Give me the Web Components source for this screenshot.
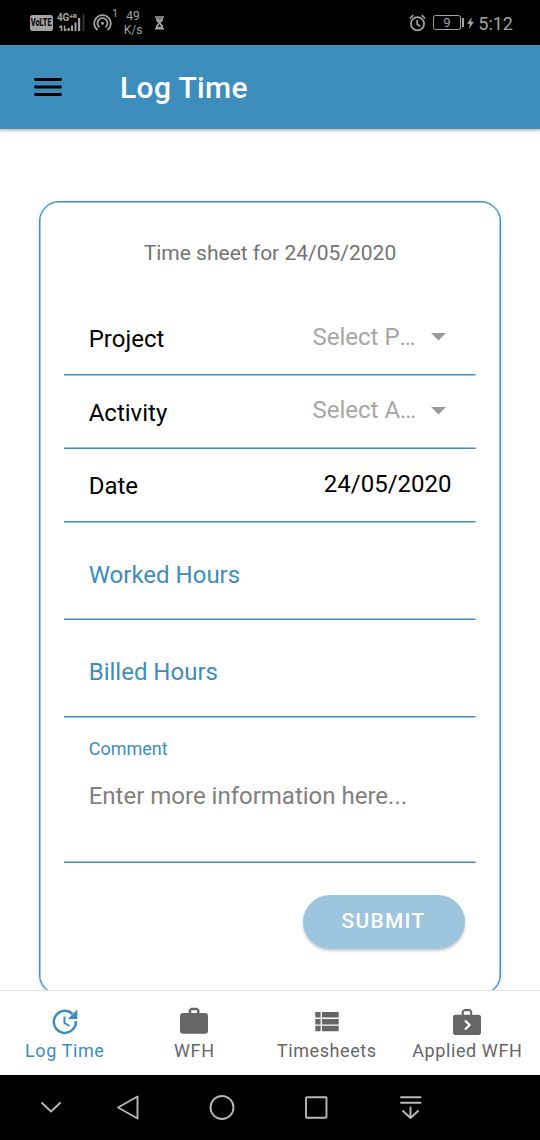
<!DOCTYPE html>
<html lang="en">
<head>
<meta charset="utf-8">
<title>Log Time</title>
<style>
html,body{margin:0;height:100%;background:#fff;overflow:hidden}
body{font-family:Roboto,"Liberation Sans",sans-serif;--brand:#3d8dbd;--soft:#9ac4de;
--upper:linear-gradient(var(--brand) 50%,var(--soft) 50%) bottom/100% 2px no-repeat;
--lower:linear-gradient(var(--soft) 50%,var(--brand) 50%) bottom/100% 2px no-repeat}
</style>
</head>
<body>
<log-app></log-app>
<script>
const define = (name, html) => customElements.define(name, class extends HTMLElement {
  constructor() {
    super();
    const t = document.createElement('template');
    t.innerHTML = html;
    this.attachShadow({mode: 'open'}).append(t.content.cloneNode(true));
  }
});

define('status-bar', `
<style>
:host{display:flex;height:45px;background:#000;color:#a3a3a3;box-sizing:border-box;padding:0 27px 0 30px;align-items:flex-start}
svg{display:block;flex:none}
.volte{box-sizing:border-box;width:23px;height:16px;margin-top:15px;border-radius:2.5px;background:#a3a3a3;color:#111;font:900 10px/16px Roboto;display:flex;justify-content:center}
.volte span{transform:scaleX(.74)}
.net{width:30px;margin:12px 0 0 4px;font:700 10px/11px Roboto;letter-spacing:-.3px;position:relative;white-space:nowrap}
.net svg{position:absolute;left:0;top:0}
.hot{margin:14px 0 0 6px}
.one{font-size:11px;line-height:12px;margin:8px 0 0 0;width:6px}
.rate{width:20px;margin:9px 0 0 5px;font-size:12px;line-height:14px;text-align:center;white-space:nowrap}
.glass{margin:16px 0 0 10.5px}
.sp{flex:1}
.alarm{margin:14px 7px 0 0}
.bat{box-sizing:border-box;width:28px;height:15px;border:1px solid #a3a3a3;border-radius:2.5px;margin-top:15px;font-size:13px;line-height:14px;text-align:center}
.nub{width:2px;height:9px;background:#a3a3a3;margin:18px 0 0 1px}
.bolt{margin:17px 0 0 3px}
.time{font-size:18px;line-height:22px;margin:13px 0 0 4.5px}
</style>
<div class="volte"><span>VoLTE</span></div>
<div class="net">4G⁺ᴿ<svg width="30" height="20" viewBox="0 0 30 20"><path d="M4.500 14v5M2.500 15.500l2-2M7.500 13.500v5M9.500 17l-2 2" stroke="#a3a3a3" stroke-width="1.500" fill="none"/><path d="M10.500 16h2.200v3h-2.200zM14 13.500h2v5.500h-2zM17.500 10.500h2v8.500h-2zM21 6h2.200v13h-2.200z" fill="#a3a3a3"/><path d="M25.500 2v17h2v-17z" fill="#333"/></svg></div>
<svg class="hot" width="19" height="18" viewBox="0 0 19 18" fill="none" stroke="#a3a3a3" stroke-width="1.800"><path d="M4.500 16A8.300 8.300 0 1 1 14.500 16M6.500 13.200A5 5 0 1 1 12.500 13.200"/><circle cx="9.500" cy="9.300" r="1.500" fill="#a3a3a3" stroke="none"/></svg>
<div class="one">1</div>
<div class="rate">49<br>K/s</div>
<svg class="glass" width="11" height="14" viewBox="0 0 11 14"><path d="M1 1h9M1 12.800h9" stroke="#a3a3a3" stroke-width="1.500"/><path d="M2 2h7v2.500L6.500 7 9 9.500V12H2V9.500L4.500 7 2 4.500z" fill="#a3a3a3"/><path d="M3.500 3h4M5.500 8.500l-1.500 2h3z" stroke="#222" stroke-width=".7"/></svg>
<div class="sp"></div>
<svg class="alarm" width="17" height="18" viewBox="0 0 17 18" fill="none" stroke="#a3a3a3" stroke-width="1.700"><circle cx="8.500" cy="9.800" r="6.600"/><path d="M8.200 6v4.200l3 2.200M.8 4.500 4.300 1.200M16.200 4.500l-3.500-3.300"/></svg>
<div class="bat">9</div><div class="nub"></div>
<svg class="bolt" width="7" height="12" viewBox="0 0 7 12"><path d="M5 0 0 6.800h2.800L1.800 12 7 4.800H4z" fill="#a3a3a3"/></svg>
<div class="time">5:12</div>
`);

define('app-header', `
<style>
:host{display:flex;box-sizing:border-box;height:84px;background:var(--brand);padding-left:34px;align-items:center;position:relative;z-index:1;box-shadow:0 2px 1px rgba(0,0,0,.13),0 3px 3px rgba(0,0,0,.07)}
h1{margin:1px 0 0 58px;font-weight:500;font-size:30px;line-height:36px;color:#fff;letter-spacing:.35px}
</style>
<svg width="28" height="20" viewBox="0 0 28 20"><path d="M1.500 2.500h25M1.500 10h25M1.500 17.500h25" stroke="#000" stroke-width="2.800" stroke-linecap="round"/></svg>
<h1><slot></slot></h1>
`);

define('form-row', `
<style>
:host{display:flex;justify-content:space-between;box-sizing:border-box;height:73.5px;background:var(--upper);padding:0 24px 0 24.300px;font-size:24px;line-height:75px;color:#000;white-space:nowrap}
:host([tall]){height:97.5px;line-height:104.5px;color:var(--brand)}
:host([low]){background:var(--lower)}
.v{margin-top:-2.300px}
</style>
<slot></slot><span class="v"><slot name="value"></slot></span>
`);

define('select-value', `
<style>
:host{display:flex;align-items:center;color:#a6a6a6;padding-right:6px}
:host([wide]){font-kerning:none}
.t{width:104px}
svg{margin-left:14px}
</style>
<span class="t"><slot></slot></span><svg width="15" height="8" viewBox="0 0 15 8"><path d="M0 0h15L7.500 7.500z" fill="#999"/></svg>
`);

define('comment-field', `
<style>
:host{display:block;box-sizing:border-box;height:145.5px;background:var(--lower);padding:20px 24.300px 0;color:var(--brand)}
.l{font-size:18px;line-height:22px}
.p{font-size:24px;line-height:30px;margin-top:21px;color:#808080;white-space:nowrap}
</style>
<div class="l"><slot></slot></div><div class="p"><slot name="hint"></slot></div>
`);

define('submit-button', `
<style>
:host{display:block;box-sizing:border-box;width:162px;height:54px;border-radius:27px;background:#9ec5de;box-shadow:0 2px 3px rgba(0,0,0,.2);color:#fff;font-weight:500;font-size:20.800px;line-height:53px;letter-spacing:1.400px;padding-right:1px;text-align:center}
</style><slot></slot>
`);

define('time-card', `
<style>
:host{display:block;box-sizing:border-box;width:462px;height:794px;margin:72px 0 0 39px;border:1px solid var(--brand);border-radius:20px;padding:0 24.500px 0 24.400px;background:#fff;box-shadow:inset 0 0 0 .5px var(--brand),0 1px 4px rgba(61,141,189,.25)}
.t{padding-top:38px;height:62px;font-size:21px;line-height:26px;color:#737373;text-align:center}
submit-button{margin:31.5px 10.5px 0 auto}
</style>
<div class="t">Time sheet for 24/05/2020</div>
<form-row>Project<select-value wide slot="value">Select P…</select-value></form-row>
<form-row low>Activity<select-value slot="value">Select A…</select-value></form-row>
<form-row>Date<span slot="value">24/05/2020</span></form-row>
<form-row tall low>Worked Hours</form-row>
<form-row tall>Billed Hours</form-row>
<comment-field>Comment<span slot="hint">Enter more information here...</span></comment-field>
<submit-button>SUBMIT</submit-button>
`);

define('tab-item', `
<style>
:host{display:flex;flex-direction:column;align-items:center;color:#666;font-size:18px;line-height:22px;letter-spacing:.6px;white-space:nowrap;padding-top:14px}
:host([active]){color:var(--brand)}
.i{height:35px}
.l{padding-left:.6px}
</style><div class="i"><slot name="icon"></slot></div><span class="l"><slot></slot></span>
`);

define('tab-bar', `
<style>
:host{display:grid;grid-template-columns:129px 130px 135px 146px;box-sizing:border-box;height:85px;border-top:1px solid #e6e6e6;background:#fff}
svg{display:block}
</style>
<tab-item active>Log Time<svg slot="icon" width="30" height="32" viewBox="0 0 30 32"><path d="M25.800 16A11 11 0 1 1 22.500 9" fill="none" stroke="currentColor" stroke-width="2.500"/><path d="M27.300 4.500v9.500h-9.500z" fill="currentColor"/><path d="M14.500 11.500v6.500l5 3" fill="none" stroke="currentColor" stroke-width="2"/></svg></tab-item>
<tab-item>WFH<svg slot="icon" width="28" height="32" viewBox="0 0 28 32"><path fill="currentColor" fill-rule="evenodd" d="M11 2.700h6.200l2.300 2.300v3h5.500q3 0 3 3v14.700q0 3-3 3H3q-3 0-3-3V11q0-3 3-3h5.700v-3zM11.200 5.200v2.800h5.800V5.200z"/></svg></tab-item>
<tab-item>Timesheets<svg slot="icon" width="24" height="32" viewBox="0 0 24 32"><path fill="currentColor" d="M.3 7h5.300v5.500H.3zM7 7h16.700v5.500H7zM.3 13.900h5.300v5.500H.3zM7 13.900h16.700v5.500H7zM.3 20.800h5.300v5.500H.3zM7 20.800h16.700v5.500H7z"/></svg></tab-item>
<tab-item>Applied WFH<svg slot="icon" width="28" height="32" viewBox="0 0 28 32"><path fill="currentColor" fill-rule="evenodd" d="M11 4h6.200l2 2.300v3.500h6.300q2.500 0 2.500 2.500v15.200q0 2.500-2.500 2.500H2.500Q0 30 0 27.500V12.300q0-2.500 2.500-2.500H8.700V6.300zM10.800 6.300v3.500h6.300V6.300z"/><path d="M12 15.500l4.500 4.500L12 24.500" fill="none" stroke="#fff" stroke-width="2.200"/></svg></tab-item>
`);

define('nav-bar', `
<style>
:host{display:flex;height:65px;background:#000}
svg{display:block}
</style>
<svg width="540" height="65" viewBox="0 0 540 65" fill="none" stroke="#b8b8b8" stroke-width="1.900" stroke-linecap="round" stroke-linejoin="round"><path d="M42 28l9 8.500 9-8.500M137.500 21.500v22L118 32.500z"/><circle cx="222" cy="32.500" r="11.500"/><rect x="306" y="22.300" width="20.500" height="20.500" rx="1"/><path d="M401 22.200h19.500M401 27.700h19.500M410.500 32.500v10M403 36l7.500 7 7.500-7"/></svg>
`);

define('log-app', `
<style>
:host{display:flex;flex-direction:column;width:540px;height:1140px;overflow:hidden}
main{display:flow-root;flex:1;min-height:0;overflow:hidden;background:#fff}
status-bar,app-header,tab-bar,nav-bar{flex:none}
</style>
<status-bar></status-bar><app-header>Log Time</app-header>
<main><time-card></time-card></main>
<tab-bar></tab-bar><nav-bar></nav-bar>
`);
</script>
</body>
</html>
